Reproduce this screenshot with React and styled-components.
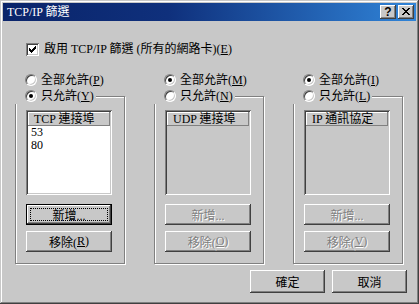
import React from 'react';
import styled, { createGlobalStyle, css } from 'styled-components';

const FONT = `"Liberation Serif", "Noto Sans CJK TC", serif`;
const FACE = '#c8c8c8';

const GlobalStyle = createGlobalStyle`
  html, body {
    margin: 0;
    padding: 0;
    background: ${FACE};
  }
  body {
    font-family: ${FONT};
    font-size: 12px;
    color: #000;
  }
`;

const raised = css`
  box-shadow: inset -1px -1px #404040, inset 1px 1px #fff, inset -2px -2px #808080;
`;

const sunken = css`
  box-shadow: inset 1px 1px #808080, inset -1px -1px #fff, inset 2px 2px #404040, inset -2px -2px ${FACE};
`;

const Window = styled.div`
  width: 419px;
  height: 304px;
  box-sizing: border-box;
  padding: 3px;
  background: ${FACE};
  box-shadow: inset -1px -1px #404040, inset 1px 1px ${FACE}, inset -2px -2px #808080, inset 2px 2px #fff;
  display: flex;
  flex-direction: column;
`;

const TitleBar = styled.div`
  height: 18px;
  display: flex;
  align-items: center;
  padding: 0 2px 0 4px;
  background: linear-gradient(90deg, #0a246a 0%, #0f307c 40%, #3084d8 100%);
`;

const Title = styled.div`
  flex: 1;
  color: #fff;
  font-size: 12px;
  line-height: 18px;
  white-space: nowrap;
`;

const TitleButton = styled.div`
  width: 16px;
  height: 14px;
  box-sizing: border-box;
  background: ${FACE};
  ${raised};
  display: flex;
  align-items: center;
  justify-content: center;
  font-family: "Liberation Sans", sans-serif;
  font-weight: bold;
  font-size: 12px;
  line-height: 14px;
  margin-left: ${p => (p.$gap ? '2px' : '0')};
  padding-bottom: 1px;
`;

const Body = styled.div`
  flex: 1;
  display: flex;
  flex-direction: column;
  padding: 22px 0 0 12px;
`;

const CheckRow = styled.label`
  display: flex;
  align-items: center;
  height: 13px;
  margin-left: 11px;
  gap: 5px;
  line-height: 13px;
  white-space: nowrap;
`;

const CheckBox = styled.div`
  width: 13px;
  height: 13px;
  box-sizing: border-box;
  background: #fff;
  ${sunken};
  display: flex;
  align-items: center;
  justify-content: center;
`;

const U = styled.span`
  text-decoration: underline;
`;

const Groups = styled.div`
  display: flex;
  gap: 29px;
  margin-top: 16px;
`;

const Group = styled.div`
  width: 110px;
  display: flex;
  flex-direction: column;
`;

const RadioRow = styled.div`
  display: flex;
  align-items: center;
  height: 16px;
  gap: 4px;
  padding-left: 10px;
  white-space: nowrap;
  line-height: 16px;
`;

const RadioCircle = styled.div`
  width: 12px;
  height: 12px;
  box-sizing: border-box;
  border-radius: 50%;
  background: #fff;
  border: 1px solid;
  border-color: #808080 #fff #fff #808080;
  box-shadow: inset 1px 1px #404040, inset -1px -1px ${FACE};
  display: flex;
  align-items: center;
  justify-content: center;
  &::after {
    content: '';
    width: 4px;
    height: 4px;
    border-radius: 50%;
    background: ${p => (p.$on ? '#000' : 'transparent')};
  }
`;

const Frame = styled.div`
  position: relative;
  margin-top: 8px;
  border: 1px solid #808080;
  box-shadow: inset 1px 1px #fff, 1px 1px #fff;
  padding: 13px 0 11px 10px;
  display: flex;
  flex-direction: column;
  align-items: flex-start;
`;

const Legend = styled.div`
  position: absolute;
  top: -9px;
  left: -1px;
  background: ${FACE};
  padding-right: 2px;
`;

const ListBox = styled.div`
  width: 86px;
  height: 85px;
  box-sizing: border-box;
  padding: 2px;
  background: ${p => (p.$disabled ? FACE : '#fff')};
  ${sunken};
  display: flex;
  flex-direction: column;
`;

const ListHeader = styled.div`
  height: 14px;
  box-sizing: border-box;
  padding-left: 6px;
  background: ${FACE};
  box-shadow: inset -1px -1px #808080, inset 1px 1px #fff;
  line-height: 14px;
  white-space: nowrap;
`;

const ListItem = styled.div`
  height: 13px;
  line-height: 13px;
  padding-left: 3px;
`;

const Button = styled.div`
  width: ${p => p.$w || 86}px;
  height: ${p => p.$h || 21}px;
  box-sizing: border-box;
  background: ${FACE};
  ${raised};
  display: flex;
  align-items: center;
  justify-content: center;
  white-space: nowrap;
  position: relative;
  color: ${p => (p.$disabled ? '#808080' : '#000')};
  text-shadow: ${p => (p.$disabled ? '1px 1px #fff' : 'none')};
  margin-top: ${p => p.$mt || 0}px;
  ${p =>
    p.$default &&
    css`
      border: 1px solid #000;
      &::after {
        content: '';
        position: absolute;
        inset: 3px;
        border: 1px dotted #000;
      }
    `}
`;

const Footer = styled.div`
  display: flex;
  justify-content: flex-end;
  gap: 7px;
  margin-top: 6px;
  padding-right: 9px;
`;

const Check = () => (
  <svg width="7" height="7" viewBox="0 0 7 7" shapeRendering="crispEdges">
    <path d="M6 0h1v3h-1v1h-1v1h-1v1h-1v1h-1v-1h-1v-1h-1v-3h1v1h1v1h1v-1h1v-1h1v-1h1z" fill="#000" />
  </svg>
);

const CloseGlyph = () => (
  <svg width="8" height="7" viewBox="0 0 8 7" shapeRendering="crispEdges">
    <path d="M0 0h2v1h1v1h2v-1h1v-1h2v1h-1v1h-1v1h-1v1h1v1h1v1h1v1h-2v-1h-1v-1h-2v1h-1v1h-2v-1h1v-1h1v-1h1v-1h-1v-1h-1v-1h-1z" fill="#000" />
  </svg>
);

const Radio = ({ on, children }) => (
  <RadioRow>
    <RadioCircle $on={on} />
    <span>{children}</span>
  </RadioRow>
);

const FilterGroup = ({ allowAll, allKey, onlyKey, header, items, addLabel, removeKey, enabled }) => (
  <Group>
    <Radio on={allowAll}>
      全部允許(<U>{allKey}</U>)
    </Radio>
    <Frame>
      <Legend>
        <Radio on={!allowAll}>
          只允許(<U>{onlyKey}</U>)
        </Radio>
      </Legend>
      <ListBox $disabled={!enabled}>
        <ListHeader>{header}</ListHeader>
        {items.map(item => (
          <ListItem key={item}>{item}</ListItem>
        ))}
      </ListBox>
      <Button $mt={9} $default={enabled} $disabled={!enabled}>
        {addLabel}
      </Button>
      <Button $mt={6} $disabled={!enabled}>
        移除(<U>{removeKey}</U>)
      </Button>
    </Frame>
  </Group>
);

export default function App() {
  return (
    <>
      <GlobalStyle />
      <Window>
        <TitleBar>
          <Title>TCP/IP 篩選</Title>
          <TitleButton>?</TitleButton>
          <TitleButton $gap>
            <CloseGlyph />
          </TitleButton>
        </TitleBar>
        <Body>
          <CheckRow>
            <CheckBox>
              <Check />
            </CheckBox>
            <span>
              啟用 TCP/IP 篩選 (所有的網路卡)(<U>E</U>)
            </span>
          </CheckRow>
          <Groups>
            <FilterGroup
              allowAll={false}
              allKey="P"
              onlyKey="Y"
              header="TCP 連接埠"
              items={['53', '80']}
              addLabel="新增..."
              removeKey="R"
              enabled
            />
            <FilterGroup
              allowAll
              allKey="M"
              onlyKey="N"
              header="UDP 連接埠"
              items={[]}
              addLabel="新增..."
              removeKey="O"
            />
            <FilterGroup
              allowAll
              allKey="I"
              onlyKey="L"
              header="IP 通訊協定"
              items={[]}
              addLabel="新增..."
              removeKey="V"
            />
          </Groups>
          <Footer>
            <Button $w={75} $h={23}>確定</Button>
            <Button $w={75} $h={23}>取消</Button>
          </Footer>
        </Body>
      </Window>
    </>
  );
}
